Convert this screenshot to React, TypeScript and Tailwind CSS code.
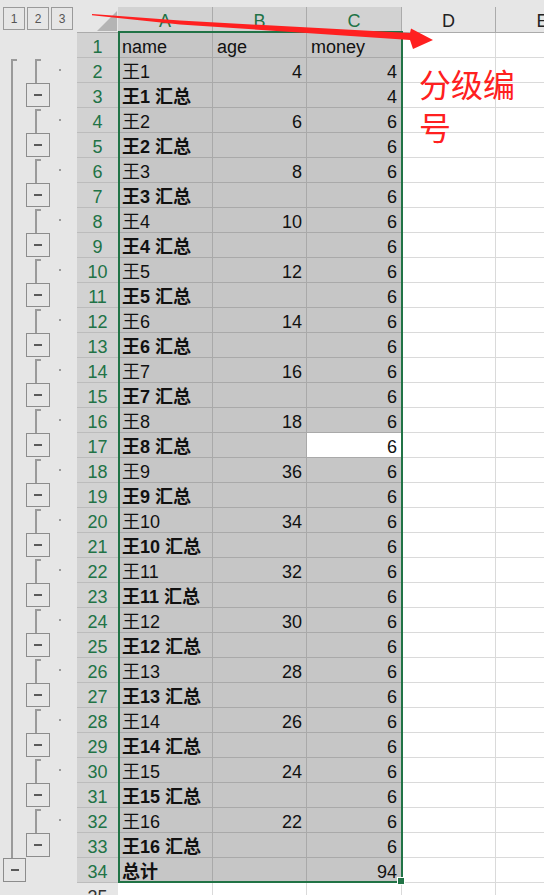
import React from "react";

type Row = { a: string; b: string; c: string; bold?: boolean; head?: boolean };

const ages = [4, 6, 8, 10, 12, 14, 16, 18, 36, 34, 32, 30, 28, 26, 24, 22];
const rows: Row[] = [{ a: "name", b: "age", c: "money", head: true }];
for (let i = 1; i <= 16; i++) {
  const m = i === 1 ? "4" : "6";
  rows.push({ a: `王${i}`, b: String(ages[i - 1]), c: m });
  rows.push({ a: `王${i} 汇总`, b: "", c: m, bold: true });
}
rows.push({ a: "总计", b: "", c: "94", bold: true });

function MinusBox({ pos }: { pos: string }) {
  return (
    <div className={`absolute top-0 h-[24px] border border-[#8c8c8c] bg-[#e6e6e6] flex items-center justify-center ${pos}`}>
      <div className="w-[8px] h-[2px] bg-[#5a5a5a]" />
    </div>
  );
}

function Gutter({ n }: { n: number }) {
  return (
    <div className="relative w-[77px] h-full shrink-0 bg-[#e6e6e6]">
      {n >= 2 && n <= 33 && (
        <div className={`absolute left-[11px] w-[2px] bottom-0 bg-[#9a9a9a] ${n === 2 ? "top-[1px]" : "top-0"}`} />
      )}
      {n === 2 && <div className="absolute left-[11px] top-[1px] w-[6px] h-[2px] bg-[#9a9a9a]" />}
      {n >= 2 && n <= 32 && n % 2 === 0 && (
        <>
          <div className="absolute left-[35px] top-[1px] bottom-0 w-[2px] bg-[#9a9a9a]" />
          <div className="absolute left-[35px] top-[1px] w-[6px] h-[2px] bg-[#9a9a9a]" />
          <div className="absolute left-[59px] top-[11px] w-[2px] h-[2px] bg-[#9a9a9a]" />
        </>
      )}
      {n >= 3 && n <= 33 && n % 2 === 1 && <MinusBox pos="left-[26px] w-[24px]" />}
      {n === 34 && <MinusBox pos="left-[3px] w-[23px]" />}
    </div>
  );
}

export default function App() {
  return (
    <div className="relative w-[544px] h-[895px] overflow-hidden bg-white font-['Liberation_Sans','Noto_Sans_CJK_SC',sans-serif] text-[18px] text-[#111]">
      <div className="h-[7px] bg-[#e6e6e6]" />
      {/* column header */}
      <div className="flex h-[26px]">
        <div className="w-[77px] shrink-0 bg-[#e6e6e6] flex items-start gap-[2px] pl-[3px]">
          {["1", "2", "3"].map((t) => (
            <div key={t} className="w-[22px] h-[23px] border border-[#9a9a9a] flex items-center justify-center text-[12px] text-[#555]">
              {t}
            </div>
          ))}
        </div>
        <div className="w-[41px] shrink-0 bg-[#e6e6e6] border-b border-[#ababab] flex items-end justify-end pr-[1px] pb-[1px]">
          <svg width="20" height="20" viewBox="0 0 20 20">
            <polygon points="0,20 20,20 20,0" fill="#b4b4b4" />
          </svg>
        </div>
        {[
          ["A", "w-[95px]"],
          ["B", "w-[94px]"],
          ["C", "w-[95px]"],
        ].map(([l, w]) => (
          <div key={l} className={`${w} shrink-0 bg-[#d2d2d2] border-r border-b border-[#ababab] flex items-center justify-center pt-[3px] text-[#217346]`}>
            {l}
          </div>
        ))}
        {["D", "E"].map((l) => (
          <div key={l} className="w-[94px] shrink-0 bg-[#e6e6e6] border-r border-b border-[#ababab] flex items-center justify-center pt-[3px] text-[#222]">
            {l}
          </div>
        ))}
      </div>
      {/* data rows */}
      {rows.map((r, i) => {
        const n = i + 1;
        const sel = "bg-[#c6c6c6] border-[#a9a9a9]";
        return (
          <div key={n} className={`flex h-[25px] ${r.bold ? "font-bold" : ""}`}>
            <Gutter n={n} />
            <div className="w-[41px] shrink-0 bg-[#d2d2d2] border-b border-[#bcbcbc] flex items-center justify-center pt-[4px] text-[#217346] font-normal">
              {n}
            </div>
            <div className={`w-[95px] shrink-0 border-r border-b ${sel} flex items-center px-[4px] pt-[4px] whitespace-nowrap`}>{r.a}</div>
            <div className={`w-[94px] shrink-0 border-r border-b ${sel} flex items-center px-[4px] pt-[4px] font-normal ${r.head ? "" : "justify-end"}`}>{r.b}</div>
            <div
              className={`w-[95px] shrink-0 border-r border-b flex items-center px-[4px] pt-[4px] font-normal ${r.head ? "" : "justify-end"} ${
                n === 17 ? "bg-white border-[#a9a9a9]" : sel
              }`}
            >
              {r.c}
            </div>
            <div className="w-[94px] shrink-0 border-r border-b border-[#dadada] bg-white" />
            <div className="w-[94px] shrink-0 border-r border-b border-[#dadada] bg-white" />
          </div>
        );
      })}
      <div className="flex h-[25px]">
        <Gutter n={35} />
        <div className="w-[41px] shrink-0 bg-[#e6e6e6] border-b border-[#bcbcbc] flex items-center justify-center pt-[4px] text-[#333]">35</div>
        {["w-[95px]", "w-[94px]", "w-[95px]", "w-[94px]", "w-[94px]"].map((w, k) => (
          <div key={k} className={`${w} shrink-0 border-r border-b border-[#dadada] bg-white`} />
        ))}
      </div>

      {/* selection border */}
      <div className="absolute left-[118px] top-[31px] w-[285px] h-[852px] border-2 border-[#217346] pointer-events-none" />
      <div className="absolute left-[397px] top-[877px] w-[8px] h-[8px] bg-[#217346] border border-white" />

      {/* annotation arrow */}
      <svg className="absolute left-0 top-0 pointer-events-none" width="544" height="60" viewBox="0 0 544 60">
        <polygon
          points="92,14 180,20.5 410,33 411,28.5 433,40 413,49 410,40 180,24.5 92,15.2"
          fill="#ff2020"
        />
      </svg>
      <div className="absolute left-[419px] top-[62px] w-[100px] text-[32px] leading-[43px] text-[#ff2020] font-['Noto_Sans_CJK_SC',sans-serif]">
        分级编号
      </div>
    </div>
  );
}
